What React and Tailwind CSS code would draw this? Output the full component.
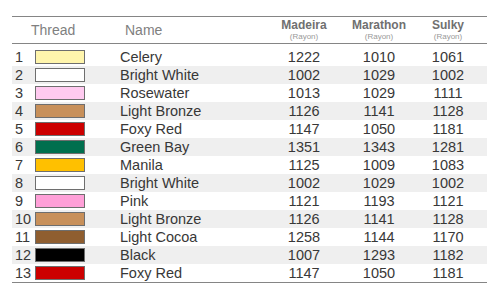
const rows = [
  ['Celery', 'bg-[#fff5ac]', '1222', '1010', '1061'],
  ['Bright White', 'bg-white', '1002', '1029', '1002'],
  ['Rosewater', 'bg-[#ffcaf0]', '1013', '1029', '1111'],
  ['Light Bronze', 'bg-[#c8905a]', '1126', '1141', '1128'],
  ['Foxy Red', 'bg-[#cc0000]', '1147', '1050', '1181'],
  ['Green Bay', 'bg-[#006f4e]', '1351', '1343', '1281'],
  ['Manila', 'bg-[#ffc000]', '1125', '1009', '1083'],
  ['Bright White', 'bg-white', '1002', '1029', '1002'],
  ['Pink', 'bg-[#ffa0d8]', '1121', '1193', '1121'],
  ['Light Bronze', 'bg-[#c8905a]', '1126', '1141', '1128'],
  ['Light Cocoa', 'bg-[#8f5e30]', '1258', '1144', '1170'],
  ['Black', 'bg-black', '1007', '1293', '1182'],
  ['Foxy Red', 'bg-[#cc0000]', '1147', '1050', '1181'],
];

const cols = 'grid grid-cols-[23px_85px_146px_76px_74px_71px]';

function Brand({ name }) {
  return (
    <div className="flex flex-col items-center leading-none">
      <span className="text-[12px] font-bold text-[#707070]">{name}</span>
      <span className="text-[8px] text-[#999] mt-[2px]">(Rayon)</span>
    </div>
  );
}

export default function App() {
  return (
    <div className="w-[500px] h-[294px] bg-white pt-[16px] px-[12px] font-['Liberation_Sans',Arial,sans-serif]">
      <div className="w-[475px] border-t border-b border-[#858585]">
        <div className={`${cols} h-[27px] items-center border-b border-[#858585]`}>
          <div className="col-span-2 pl-[19px] text-[14px] text-[#808080]">Thread</div>
          <div className="pl-[5px] text-[14px] text-[#808080]">Name</div>
          <Brand name="Madeira" />
          <Brand name="Marathon" />
          <div className="pr-[7px]"><Brand name="Sulky" /></div>
        </div>
        <div className="pt-[4px]">
          {rows.map((r, i) => (
            <div
              key={i}
              className={`${cols} h-[18px] items-center text-[14.5px] leading-none text-[#383838] ${i % 2 === 1 ? 'bg-[#efefef]' : ''}`}
            >
              <div className="pl-[3px]">{i + 1}</div>
              <div className="flex items-center">
                <div className={`w-[50px] h-[14px] border border-[#6e6e6e] ${r[1]}`} />
              </div>
              <div>{r[0]}</div>
              <div className="text-center">{r[2]}</div>
              <div className="text-center">{r[3]}</div>
              <div className="text-center pr-[7px]">{r[4]}</div>
            </div>
          ))}
        </div>
      </div>
    </div>
  );
}
